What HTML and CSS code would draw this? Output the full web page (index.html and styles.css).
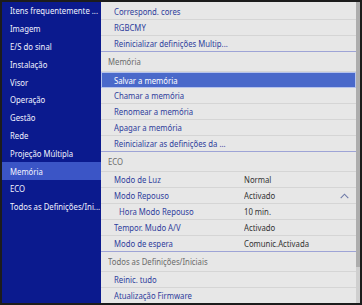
FILE: index.html
```html
<!DOCTYPE html>
<html lang="pt">
<head>
<meta charset="utf-8">
<title>Menu</title>
<link rel="stylesheet" href="styles.css">
</head>
<body>
<div class="frame">
  <nav class="side">
    <div class="side-item"><span class="t">Itens frequentemente ...</span></div>
    <div class="side-item"><span class="t">Imagem</span></div>
    <div class="side-item"><span class="t">E/S do sinal</span></div>
    <div class="side-item"><span class="t">Instalação</span></div>
    <div class="side-item"><span class="t">Visor</span></div>
    <div class="side-item"><span class="t">Operação</span></div>
    <div class="side-item"><span class="t">Gestão</span></div>
    <div class="side-item"><span class="t">Rede</span></div>
    <div class="side-item"><span class="t">Projeção Múltipla</span></div>
    <div class="side-item active"><span class="t">Memória</span></div>
    <div class="side-item"><span class="t">ECO</span></div>
    <div class="side-item"><span class="t">Todos as Definições/Ini...</span></div>
  </nav>
  <main class="content">
    <div class="list">
      <div class="row"><span class="label"><span class="t">Correspond. cores</span></span></div>
      <div class="row"><span class="label"><span class="t">RGBCMY</span></span></div>
      <div class="row end"><span class="label"><span class="t">Reinicializar definições Multip...</span></span></div>

      <div class="head"><span class="t">Memória</span></div>
      <div class="row selected"><span class="label"><span class="t">Salvar a memória</span></span></div>
      <div class="row"><span class="label"><span class="t">Chamar a memória</span></span></div>
      <div class="row"><span class="label"><span class="t">Renomear a memória</span></span></div>
      <div class="row"><span class="label"><span class="t">Apagar a memória</span></span></div>
      <div class="row end"><span class="label"><span class="t">Reinicializar as definições da ...</span></span></div>

      <div class="head"><span class="t">ECO</span></div>
      <div class="row"><span class="label"><span class="t">Modo de Luz</span></span><span class="value"><span class="t">Normal</span></span></div>
      <div class="row"><span class="label"><span class="t">Modo Repouso</span></span><span class="value"><span class="t">Activado</span></span>
        <svg class="chev" width="9" height="6" viewBox="0 0 9 6"><polyline points="0.7,5.2 4.5,1.2 8.3,5.2" fill="none" stroke="#6f7aa8" stroke-width="1.1"/></svg>
      </div>
      <div class="row"><span class="label sub"><span class="t">Hora Modo Repouso</span></span><span class="value"><span class="t">10 min.</span></span></div>
      <div class="row"><span class="label"><span class="t">Tempor. Mudo A/V</span></span><span class="value"><span class="t">Activado</span></span></div>
      <div class="row end"><span class="label"><span class="t">Modo de espera</span></span><span class="value"><span class="t">Comunic.Activada</span></span></div>

      <div class="head"><span class="t">Todos as Definições/Iniciais</span></div>
      <div class="row"><span class="label"><span class="t">Reinic. tudo</span></span></div>
      <div class="row"><span class="label"><span class="t">Atualização Firmware</span></span></div>
    </div>
    <div class="scroll"><div class="thumb"></div></div>
  </main>
</div>
</body>
</html>
```

FILE: styles.css
```css
html, body {
  margin: 0;
  padding: 0;
  background: #1c1c1c;
}
body {
  font-family: "Noto Sans", "Open Sans", sans-serif;
  font-size: 9.8px;
}
.t {
  display: inline-block;
  white-space: nowrap;
  transform: scaleX(0.79);
  transform-origin: left center;
}
.frame {
  width: 362px;
  height: 305px;
  box-sizing: border-box;
  border: 2px solid #1c1c1c;
  display: flex;
  overflow: hidden;
}
.side {
  width: 99px;
  flex: none;
  background: #0b1a8e;
  display: flex;
  flex-direction: column;
}
.side-item {
  height: 17.8px;
  flex: none;
  padding-left: 8px;
  display: flex;
  align-items: center;
  color: #f2f4ff;
  white-space: nowrap;
  overflow: hidden;
}
.side-item.active {
  background: #3b55c6;
}
.content {
  flex: 1;
  display: flex;
  background: #e7e7e7;
  min-width: 0;
}
.list {
  flex: 1;
  padding-top: 2px;
  overflow: hidden;
  display: flex;
  flex-direction: column;
}
.row {
  height: 16px;
  flex: none;
  box-sizing: border-box;
  border-bottom: 1px solid #d5d5d5;
  display: flex;
  align-items: center;
  position: relative;
  white-space: nowrap;
}
.row.end {
  border-bottom-color: #9ea4d6;
}
.row.selected {
  background: #4a69ca;
  border-bottom: none;
  box-shadow: inset 0 0 0 1px #b6c3ec;
}
.row.selected .label {
  color: #ffffff;
}
.label {
  width: 130px;
  padding-left: 13px;
  color: #2e3d9c;
  flex: none;
}
.label.sub {
  width: 125px;
  padding-left: 18px;
}
.value {
  color: #333333;
}
.chev {
  position: absolute;
  right: 7px;
  top: 5px;
}
.head {
  height: 20px;
  flex: none;
  box-sizing: border-box;
  border-bottom: 1px solid #d5d5d5;
  padding-left: 7px;
  display: flex;
  align-items: center;
  color: #6b6b6b;
  white-space: nowrap;
}
.scroll {
  width: 4px;
  flex: none;
  background: #cfcfcf;
  display: flex;
  flex-direction: column;
}
.thumb {
  height: 265px;
  background: #adadad;
}
```
